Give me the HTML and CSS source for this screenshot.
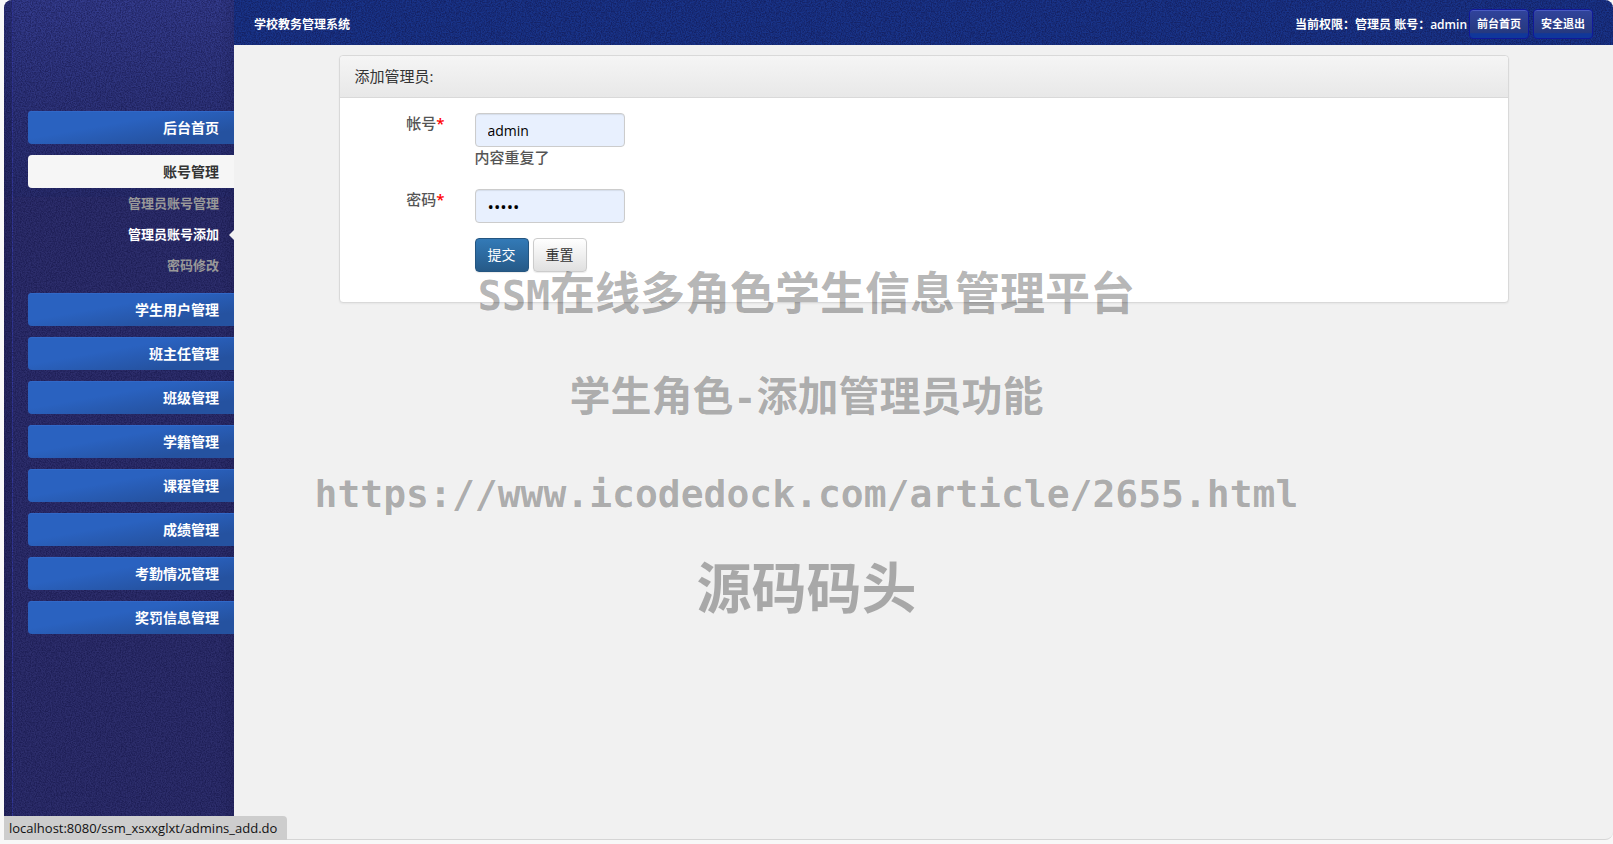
FILE: index.html
```html
<!DOCTYPE html>
<html lang="zh-CN">
<head>
  <meta charset="UTF-8">
  <title>学校教务管理系统</title>
  <link rel="stylesheet" href="styles.css">
</head>
<body>
  <div class="window">
    <aside class="sidebar">
      <svg class="noise" aria-hidden="true">
        <filter id="grain" color-interpolation-filters="sRGB">
          <feTurbulence type="fractalNoise" baseFrequency="0.8" numOctaves="2" seed="3"/>
          <feColorMatrix type="matrix" values="0 0 0 0 0.06  0 0 0 0 0.06  0 0 0 0 0.25  2.4 0 0 0 -0.8"/>
        </filter>
        <rect width="100%" height="100%" filter="url(#grain)"/>
      </svg>
      <ul class="menu">
        <li><a class="menu-item" href="#">后台首页</a></li>
        <li>
          <a class="menu-item open" href="#">账号管理</a>
          <ul class="submenu">
            <li><a href="#">管理员账号管理</a></li>
            <li><a class="current" href="#">管理员账号添加</a></li>
            <li><a href="#">密码修改</a></li>
          </ul>
        </li>
        <li><a class="menu-item" href="#">学生用户管理</a></li>
        <li><a class="menu-item" href="#">班主任管理</a></li>
        <li><a class="menu-item" href="#">班级管理</a></li>
        <li><a class="menu-item" href="#">学籍管理</a></li>
        <li><a class="menu-item" href="#">课程管理</a></li>
        <li><a class="menu-item" href="#">成绩管理</a></li>
        <li><a class="menu-item" href="#">考勤情况管理</a></li>
        <li><a class="menu-item" href="#">奖罚信息管理</a></li>
      </ul>
    </aside>

    <div class="main">
      <header class="topbar">
        <svg class="noise" aria-hidden="true">
          <rect width="100%" height="100%" filter="url(#grain)"/>
        </svg>
        <span class="brand">学校教务管理系统</span>
        <div class="account">
          <span>当前权限：管理员 账号：admin</span>
          <nav class="top-links">
            <a class="top-btn" href="#">前台首页</a>
            <a class="top-btn" href="#">安全退出</a>
          </nav>
        </div>
      </header>

      <section class="panel">
        <h1 class="panel-title">添加管理员:</h1>
        <form class="panel-body" method="post">
          <div class="row">
            <label for="username">帐号<b>*</b></label>
            <div>
              <input type="text" id="username" name="username" value="admin">
              <p class="help">内容重复了</p>
            </div>
          </div>
          <div class="row">
            <label for="password">密码<b>*</b></label>
            <input type="password" id="password" name="password" value="admin">
          </div>
          <div class="actions">
            <button class="btn btn-primary" type="submit">提交</button>
            <button class="btn" type="reset">重置</button>
          </div>
        </form>
      </section>
    </div>
  </div>

  <div class="watermark">
    <p class="wm-title"><span>SSM</span>在线多角色学生信息管理平台</p>
    <p class="wm-sub">学生角色<span>-</span>添加管理员功能</p>
    <p class="wm-url">https://www.icodedock.com/article/2655.html</p>
    <p class="wm-name">源码码头</p>
  </div>

  <div class="status">localhost:8080/ssm_xsxxglxt/admins_add.do</div>
</body>
</html>
```

FILE: styles.css
```css
* { box-sizing: border-box; }
body {
  margin: 0;
  padding: 0 0 4px 4px;
  background: #f8f8f8;
  font-family: "Open Sans", "Noto Sans CJK SC", sans-serif;
  font-size: 15px;
  color: #555;
}
ul, p, h1 { margin: 0; padding: 0; list-style: none; }
a { text-decoration: none; }

.window {
  display: flex;
  min-height: calc(100vh - 4px);
  background: #f1f1f1;
  border-bottom: 1px solid #d5d5d5;
  border-radius: 8px;
  overflow: hidden;
}
.noise { position: absolute; left: 0; top: 0; width: 100%; height: 100%; opacity: 0.5; }

/* sidebar */
.sidebar {
  position: relative;
  width: 230px;
  flex: none;
  padding: 111px 0 0 24px;
  background:
    linear-gradient(90deg, rgba(20, 20, 60, 0.25) 8px, #33399a 8px, #33399a 9px, transparent 9px, transparent 215px, rgba(20, 20, 60, 0.15)),
    linear-gradient(#343c8c, #292d6c 197px, #2d2e6c 197px);
}
.menu { position: relative; }
.menu-item {
  display: block;
  height: 33px;
  margin-bottom: 11px;
  padding-right: 15px;
  border-radius: 4px 0 0 4px;
  background: linear-gradient(170deg, #2a62c0 40%, #2552a0 80%);
  box-shadow: inset 0 1px #3068c8;
  color: #fff;
  font-size: 14px;
  font-weight: bold;
  line-height: 33px;
  text-align: right;
}
.menu-item.open { margin: 0; background: #f6f6f6; box-shadow: none; color: #333; }
.submenu { padding-bottom: 12px; }
.submenu a {
  display: block;
  position: relative;
  padding-right: 15px;
  color: #999;
  font-size: 13px;
  font-weight: bold;
  line-height: 31px;
  text-align: right;
}
.submenu .current { color: #fff; }
.submenu .current::after {
  content: "";
  position: absolute;
  right: 0;
  top: 11px;
  border: 5px solid transparent;
  border-left: 0;
  border-right-color: #f1f1f1;
}

/* top bar */
.main { flex: 1; }
.topbar {
  position: relative;
  display: flex;
  justify-content: space-between;
  align-items: center;
  height: 45px;
  padding: 2px 20px 0;
  background: #193489;
  color: #fff;
  font-size: 12px;
  font-weight: 600;
}
.brand, .account { position: relative; }
.account { display: flex; align-items: center; gap: 2px; }
.top-links { display: flex; gap: 4px; }
.top-btn {
  height: 30px;
  padding: 0 7px;
  border: 1px solid #10189a;
  border-radius: 4px;
  background: linear-gradient(#31449c, #26397f 80%, #10379a 85%);
  box-shadow: inset 0 1px #4a5cc0;
  color: #fff;
  font-size: 11px;
  line-height: 28px;
}

/* form panel */
.panel {
  max-width: 1170px;
  margin: 10px auto 0;
  background: #fff;
  border: 1px solid #d9d9d9;
  border-radius: 4px;
  box-shadow: 0 1px 2px rgba(0, 0, 0, 0.05);
}
.panel-title {
  height: 42px;
  padding: 0 15px;
  border-bottom: 1px solid #d9d9d9;
  border-radius: 4px 4px 0 0;
  background: linear-gradient(#f5f5f5, #e8e8e8);
  color: #333;
  font-size: 15px;
  font-weight: normal;
  line-height: 40px;
}
.panel-body { padding: 15px 15px 30px; }
.row { display: flex; gap: 30px; margin-bottom: 15px; }
.row label { width: 90px; line-height: 20px; font-weight: 500; text-align: right; }
.row label b { color: #f00; font-weight: 600; }
.row input {
  display: block;
  width: 150px;
  height: 34px;
  padding: 6px 12px;
  border: 1px solid #ccc;
  border-radius: 4px;
  background: #e8f0fe;
  box-shadow: inset 0 1px 1px rgba(0, 0, 0, 0.08);
  color: #000;
  font-family: inherit;
  font-size: 14px;
}
.row input[type="password"] { font-size: 17px; }
.help { line-height: 20px; margin-bottom: 7px; font-weight: 500; }
.actions { display: flex; gap: 4px; padding-left: 120px; }
.btn {
  height: 34px;
  padding: 0 12px 2px;
  border: 1px solid #ccc;
  border-radius: 4px;
  background: linear-gradient(#fff, #e0e0e0);
  box-shadow: 0 1px 1px rgba(0, 0, 0, 0.08);
  color: #333;
  font-family: inherit;
  font-size: 14px;
}
.btn-primary { border-color: #245580; background: linear-gradient(#337ab7, #265a88); color: #fff; }

/* overlays */
.watermark {
  position: absolute;
  left: 0;
  right: 0;
  top: 240px;
  color: rgba(0, 0, 0, 0.3);
  font-family: "Noto Sans CJK SC", sans-serif;
  font-weight: bold;
  text-align: center;
  pointer-events: none;
}
.watermark span { font-family: "DejaVu Sans Mono", monospace; font-size: 38px; line-height: 1; }
.wm-title { font-size: 45px; line-height: 102px; }
.wm-title span { font-size: 40px; }
.wm-sub { font-size: 41px; line-height: 102px; }
.wm-url { font-family: "DejaVu Sans Mono", monospace; font-size: 38px; line-height: 100px; }
.wm-name { font-size: 55px; line-height: 80px; }

.status {
  position: fixed;
  left: 4px;
  bottom: 4px;
  padding: 0 10px 0 5px;
  border-radius: 0 4px 0 0;
  background: #cdcdcd;
  color: #111;
  font-size: 13px;
  line-height: 24px;
}
```
